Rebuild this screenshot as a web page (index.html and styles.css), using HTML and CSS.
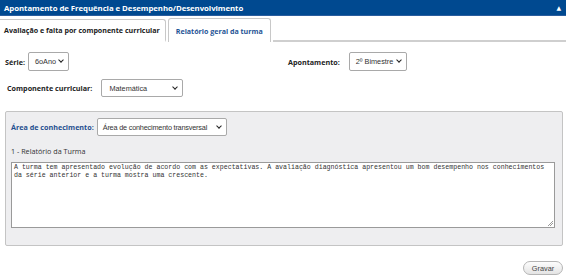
FILE: index.html
```html
<!DOCTYPE html>
<html lang="pt">
<head>
<meta charset="utf-8">
<link rel="stylesheet" href="styles.css">
</head>
<body>
<div class="header">
  <span class="title">Apontamento de Frequência e Desempenho/Desenvolvimento</span>
  <span class="arrow">&#9650;</span>
</div>
<div class="tabs">
  <div class="tab">Avaliação e falta por componente curricular</div>
  <div class="tab active">Relatório geral da turma</div>
  <div class="tab-fill"></div>
</div>
<div class="filters">
  <div class="row">
    <div class="field serie">
      <label class="lbl">Série:</label>
      <div class="sel sel-serie"><span>6oAno</span><span class="chev"></span></div>
    </div>
    <div class="field apont">
      <label class="lbl">Apontamento:</label>
      <div class="sel sel-apont"><span>2º Bimestre</span><span class="chev"></span></div>
    </div>
  </div>
  <div class="row row2">
    <div class="field comp">
      <label class="lbl">Componente curricular:</label>
      <div class="sel sel-comp"><span>Matemática</span><span class="chev"></span></div>
    </div>
  </div>
</div>
<div class="panel">
  <div class="field area">
    <label class="lbl blue">Área de conhecimento:</label>
    <div class="sel sel-area"><span>Área de conhecimento transversal</span><span class="chev"></span></div>
  </div>
  <div class="sub">1 - Relatório da Turma</div>
  <div class="ta">A turma tem apresentado evolução de acordo com as expectativas. A avaliação diagnóstica apresentou um bom desempenho nos conhecimentos da série anterior e a turma mostra uma crescente.<span class="grip"></span></div>
</div>
<div class="actions">
  <button class="btn">Gravar</button>
</div>
</body>
</html>
```
FILE: styles.css
```css
html, body { margin: 0; padding: 0; background: #fff; }
body { width: 566px; height: 279px; overflow: hidden; font-family: "Open Sans", "DejaVu Sans", sans-serif; color: #222; }
.header { height: 15px; background: #004990; display: flex; align-items: center; justify-content: space-between; padding: 0 5px 0 4px; border-bottom: 1px solid #2a5d9e; }
.title { color: #fff; font-weight: 700; font-size: 7.8px; letter-spacing: -0.05px; }
.arrow { color: #fff; font-size: 6px; }
.tabs { display: flex; margin-top: 1px; height: 25px; align-items: flex-end; }
.tab { height: 23px; box-sizing: border-box; padding: 0 5px 0 4px; border: 1px solid #c8c8c8; border-bottom: none; border-radius: 3px 3px 0 0; font-size: 7.1px; font-weight: 700; color: #222; display: flex; align-items: center; background: #fff; margin-right: 2px; }
.tab:first-child { border-left: none; border-top-left-radius: 0; border-bottom: 2px solid transparent; }
.tab.active { color: #1f5596; height: 24px; padding: 0 7px 0 7px; }
.tab-fill { flex: 1; border-bottom: 2px solid #cfcfcf; }
.filters { padding: 10px 0 0 5px; }
.row { display: flex; align-items: center; }
.row2 { margin-top: 8px; padding-left: 2px; }
.field { display: flex; align-items: center; }
.lbl { font-size: 7.2px; font-weight: 700; color: #222; }
.lbl.blue { color: #1f4f8f; }
.serie .lbl { margin-right: 3px; }
.apont { margin-left: 219px; }
.apont .lbl { margin-right: 9px; }
.comp .lbl { margin-right: 9px; }
.sel { box-sizing: border-box; height: 19px; border: 1px solid #a9a9a9; border-radius: 2px; background: #fff; display: flex; align-items: center; justify-content: space-between; padding: 0 5px 0 6px; font-family: "Liberation Sans", Arial, sans-serif; font-size: 7.3px; color: #333; }
.sel-serie { width: 41px; }
.sel-apont { width: 58px; }
.sel-comp { width: 82px; height: 18px; padding-left: 7px; }
.sel-area { width: 130px; height: 18px; padding-left: 5px; letter-spacing: -0.2px; }
.chev { width: 3px; height: 3px; border-right: 1.5px solid #222; border-bottom: 1.5px solid #222; transform: rotate(45deg); margin-top: -3px; flex: none; margin-left: 3px; }
.panel { margin: 14px 3px 0 5px; height: 135px; box-sizing: border-box; background: #eeeef0; border: 1px solid #c4c4c4; border-radius: 2px; padding: 6px 7px 0 5px; }
.area .lbl { margin-right: 3px; }
.sub { margin-top: 10px; font-size: 7.2px; color: #333; }
.ta { position: relative; margin-top: 6px; height: 66px; box-sizing: border-box; background: #fff; border: 1px solid #9a9a9a; padding: 1px 2px; font-family: "Liberation Mono", "DejaVu Sans Mono", monospace; font-size: 6.6px; line-height: 8px; color: #333; }
.grip { position: absolute; right: 1px; bottom: 1px; width: 5px; height: 5px; background: linear-gradient(135deg, transparent 45%, #999 45%, #999 55%, transparent 55%, transparent 70%, #999 70%, #999 80%, transparent 80%); }
.actions { display: flex; justify-content: flex-end; padding: 15px 3px 0 0; }
.btn { height: 14px; width: 40px; border: 1px solid #b5b5b5; border-radius: 7px; background: linear-gradient(#fdfdfd, #e4e4e4); font-family: "Liberation Sans", Arial, sans-serif; font-size: 7.3px; color: #444; padding: 0; }
```
